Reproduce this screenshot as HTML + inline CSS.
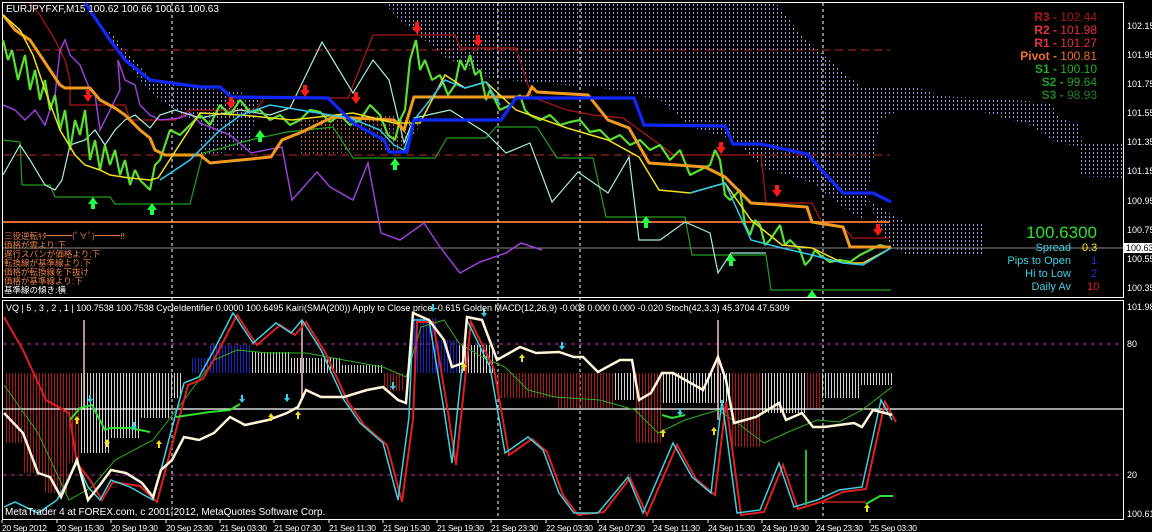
<!DOCTYPE html>
<html><head><meta charset="utf-8"><style>
html,body{margin:0;padding:0;background:#000;width:1152px;height:532px;overflow:hidden}
svg{display:block}
text{font-family:"Liberation Sans","Noto Sans CJK JP",sans-serif}
</style></head><body>
<svg width="1152" height="532" viewBox="0 0 1152 532" xmlns="http://www.w3.org/2000/svg">
<defs>
<pattern id="dots" width="4" height="4" patternUnits="userSpaceOnUse"><rect x="1" y="0" width="1" height="2" fill="#9a9ae8"/></pattern>
<pattern id="rdots" width="4" height="4" patternUnits="userSpaceOnUse"><rect x="1" y="0" width="1" height="2" fill="#c0603a"/></pattern>
<pattern id="red" width="3" height="10" patternUnits="userSpaceOnUse"><rect x="0" y="0" width="1" height="10" fill="#a81818"/></pattern>
<pattern id="wht" width="3" height="10" patternUnits="userSpaceOnUse"><rect x="0" y="0" width="1" height="10" fill="#d0d0d0"/></pattern>
<pattern id="blu" width="3" height="10" patternUnits="userSpaceOnUse"><rect x="0" y="0" width="1" height="10" fill="#2020c8"/></pattern>
</defs>
<rect width="1152" height="532" fill="#000"/>
<!-- cloud -->
<path d="M384,3 L776,3 L800,33 L840,70 L863,88 L919,88 L940,96 L1000,99 L1050,103 L1060,118 L1080,125 L1082,143 L1123,143 L1123,178 L1080,176 L1078,146 L1057,143 L1030,125 L983,112 L900,110 L880,120 L863,220 L843,207 L812,183 L761,167 L735,140 L690,127 L660,100 L598,87 L532,83 L486,77 L445,57 L400,20Z" fill="url(#dots)"/>
<path d="M868,200 L905,222 L983,222 L983,255 L905,255 L885,240Z" fill="url(#dots)"/>
<path d="M105,25 L125,50 L150,78 L200,88 L240,92 L260,100 L250,120 L220,125 L190,120 L160,100 L140,80 L120,55Z" fill="url(#dots)"/>
<path d="M200,100 L225,110 L255,115 L250,150 L200,155Z" fill="url(#dots)"/>
<path d="M300,120 L400,115 L420,125 L405,150 L300,155Z" fill="url(#rdots)"/>
<rect x="2.5" y="2.5" width="1121" height="295" fill="none" stroke="#fff"/>
<rect x="2.5" y="300.5" width="1121" height="219" fill="none" stroke="#fff"/>
<line x1="3" y1="50" x2="890" y2="50" stroke="#c02828" stroke-dasharray="8,5"/>
<line x1="3" y1="155" x2="890" y2="155" stroke="#c02828" stroke-dasharray="8,5"/>
<line x1="3" y1="222" x2="890" y2="222" stroke="#e06a30" stroke-width="2"/>
<line x1="3" y1="248" x2="1123" y2="248" stroke="#8a8a8a"/>
<g stroke="#fff" stroke-dasharray="3,3">
<line x1="172" y1="3" x2="172" y2="520"/><line x1="498" y1="3" x2="498" y2="520"/>
<line x1="580" y1="3" x2="580" y2="520"/><line x1="823" y1="3" x2="823" y2="520"/>
</g>
<polyline fill="none" stroke="#20a020" stroke-width="1.2" points="3,140 20,142 22,185 50,185 55,197 110,197 115,204 190,204 203,153 215,150 250,140 287,132 333,127 353,158 435,158 447,138 486,138 496,127 537,127 557,158 593,158 606,217 685,217 692,255 766,255 771,290 891,290"/>
<polyline fill="none" stroke="#b01818" stroke-width="1.2" points="30,3 40,15 55,40 65,60 70,80 70,105 125,105 130,120 175,120 190,110 256,110 264,98 348,98 373,35 455,35 460,48 516,48 532,97 567,110 593,115 623,118 674,155 761,155 766,203 812,203 822,223 843,227 853,238 889,238"/>
<polyline fill="none" stroke="#9a40d8" stroke-width="1.5" points="3,105 15,110 25,120 35,110 45,125 55,95 60,50 65,40 70,55 80,65 90,90 95,95 100,130 110,110 120,90 118,60 125,80 135,85 140,105 150,115 160,120 180,118 190,113 200,123 230,135 251,153 282,147 292,200 317,172 330,187 353,200 368,163 381,233 400,240 424,223 440,247 460,273 480,262 506,253 521,243 542,250"/>
<polyline fill="none" stroke="#a8f0e0" stroke-width="1.2" points="3,175 20,145 30,160 45,185 55,190 62,180 70,145 85,140 95,130 105,145 115,130 125,120 135,115 150,128 160,115 175,110 200,118 240,110 270,115 290,108 322,42 333,60 353,93 373,60 389,80 404,143 414,118 450,110 486,133 506,153 530,143 552,202 578,172 608,193 629,157 639,240 660,240 685,222 710,233 718,273 731,253 766,253"/>
<polyline fill="none" stroke="#58e030" stroke-width="2.2" stroke-linejoin="bevel" points="3,40 8,60 12,50 18,80 25,55 30,90 35,70 40,100 45,80 50,110 55,95 60,130 65,110 70,150 75,120 80,135 85,110 90,160 95,140 100,170 105,145 110,165 115,150 120,175 125,160 130,185 135,170 140,180 150,190 155,165 160,160 165,145 170,130 180,135 190,125 200,115 210,125 220,105 230,115 240,100 250,112 260,110 270,120 280,115 290,125 300,120 310,110 320,112 330,122 340,115 350,125 360,120 370,105 380,115 388,135 395,140 400,120 405,110 410,60 416,40 420,70 425,60 432,80 440,75 448,95 455,85 460,60 465,70 470,55 475,75 480,70 486,100 490,90 500,110 510,105 520,95 525,110 530,115 540,120 550,115 560,125 570,122 580,120 590,132 600,130 610,140 620,135 630,145 640,140 650,150 660,145 670,160 680,150 690,175 700,170 710,165 715,150 720,160 725,195 730,200 740,190 745,225 750,235 755,220 760,225 765,245 770,240 780,225 785,245 790,240 800,250 805,265 810,260 815,250 820,255 830,262 840,260 850,262 860,255 870,250 880,245 891,248"/>
<polyline fill="none" stroke="#f09a20" stroke-width="3" points="3,15 15,30 30,40 40,55 50,70 60,85 65,88 90,88 100,100 115,108 125,115 140,130 150,138 155,150 165,155 200,155 210,163 271,157 282,140 302,132 333,117 394,120 404,130 414,97 527,97 532,87 537,92 588,95 608,120 629,128 649,163 705,167 725,177 751,203 807,207 812,222 843,227 850,247 891,247"/>
<polyline fill="none" stroke="#f0e020" stroke-width="1.5" points="3,15 20,30 33,55 45,90 60,130 75,155 85,165 100,170 110,175 130,178 150,180 158,178 200,113 241,115 292,120 353,113 394,123 420,123 445,75 465,88 486,82 516,110 567,128 608,140 639,157 659,190 690,193 725,183 751,220 782,245 812,248 843,263 863,263 891,248"/>
<polyline fill="none" stroke="#30c8f0" stroke-width="1.5" points="160,180 190,160 220,130 241,115 270,105 300,110 330,115 350,118 380,130 394,145 404,150 414,120 430,100 445,80 465,88 486,82 500,105"/>
<polyline fill="none" stroke="#30c8f0" stroke-width="1.5" points="690,193 725,183 751,240 782,248 812,255 843,263 863,265 891,248"/>
<polyline fill="none" stroke="#1028ff" stroke-width="3.2" points="85,3 110,40 125,60 150,80 200,87 220,87 231,97 328,98 353,123 384,140 389,152 407,152 414,120 501,120 516,98 634,98 644,125 725,126 733,144 761,144 807,154 828,177 843,193 873,193 891,202"/>
<g fill="#ff1818">
<path d="M86,90 h4 v5 h3 l-5,7 l-5,-7 h3z"/>
<path d="M229,97 h4 v5 h3 l-5,7 l-5,-7 h3z"/>
<path d="M303,85 h4 v5 h3 l-5,7 l-5,-7 h3z"/>
<path d="M354,92 h4 v5 h3 l-5,7 l-5,-7 h3z"/>
<path d="M415,22 h4 v5 h3 l-5,7 l-5,-7 h3z"/>
<path d="M476,35 h4 v5 h3 l-5,7 l-5,-7 h3z"/>
<path d="M719,142 h4 v5 h3 l-5,7 l-5,-7 h3z"/>
<path d="M775,185 h4 v5 h3 l-5,7 l-5,-7 h3z"/>
<path d="M876,224 h4 v5 h3 l-5,7 l-5,-7 h3z"/>
</g>
<g fill="#20ff40">
<path d="M91,209 h4 v-5 h3 l-5,-7 l-5,7 h3z"/>
<path d="M150,215 h4 v-5 h3 l-5,-7 l-5,7 h3z"/>
<path d="M258,142 h4 v-5 h3 l-5,-7 l-5,7 h3z"/>
<path d="M393,170 h4 v-5 h3 l-5,-7 l-5,7 h3z"/>
<path d="M644,228 h4 v-5 h3 l-5,-7 l-5,7 h3z"/>
<path d="M729,266 h4 v-5 h3 l-5,-7 l-5,7 h3z"/>
<path d="M807,297 l5,-7 l5,7z"/>
</g>
<text x="6" y="12" fill="#fff" font-size="10">EURJPYFXF,M15  100.62 100.66 100.61 100.63</text>
<g font-size="8.5" fill="#e8804a">
<text x="4" y="239">三役逆転ｷﾀ━━━(ﾟ∀ﾟ)━━━!!</text>
<text x="4" y="248">価格が雲より:下</text>
<text x="4" y="257">遅行スパンが価格より:下</text>
<text x="4" y="266">転換線が基準線より:下</text>
<text x="4" y="275">価格が転換線を下抜け</text>
<text x="4" y="284">価格が基準線より:下</text>
<text x="4" y="293" fill="#fff">基準線の傾き:横</text>
</g>
<g font-size="12" text-anchor="end">
<text x="1097" y="21" fill="#b01818"><tspan font-weight="bold">R3 - </tspan>102.44</text>
<text x="1097" y="34" fill="#e83040"><tspan font-weight="bold">R2 - </tspan>101.98</text>
<text x="1097" y="47" fill="#e83040"><tspan font-weight="bold">R1 - </tspan>101.27</text>
<text x="1097" y="60" fill="#f07020"><tspan font-weight="bold">Pivot - </tspan>100.81</text>
<text x="1097" y="73" fill="#20b020"><tspan font-weight="bold">S1 - </tspan>100.10</text>
<text x="1097" y="86" fill="#20a020"><tspan font-weight="bold">S2 - </tspan>  99.64</text>
<text x="1097" y="99" fill="#208020"><tspan font-weight="bold">S3 - </tspan>  98.93</text>
</g>
<text x="1097" y="238" fill="#30e030" font-size="17" text-anchor="end">100.6300</text>
<g font-size="11">
<text x="1071" y="251" fill="#40d0e0" text-anchor="end">Spread</text><text x="1082" y="251" fill="#f0f020">0.3</text>
<text x="1071" y="264" fill="#40d0e0" text-anchor="end">Pips to Open</text><text x="1091" y="264" fill="#2030f0">1</text>
<text x="1071" y="277" fill="#40d0e0" text-anchor="end">Hi to Low</text><text x="1091" y="277" fill="#2030f0">2</text>
<text x="1071" y="290" fill="#40d0e0" text-anchor="end">Daily Av</text><text x="1087" y="290" fill="#f02020">10</text>
</g>
<g font-size="9" fill="#fff">
<text x="1127" y="29">102.15</text><text x="1127" y="58">101.95</text><text x="1127" y="87">101.75</text><text x="1127" y="116">101.55</text><text x="1127" y="145">101.35</text><text x="1127" y="174">101.15</text><text x="1127" y="204">100.95</text><text x="1127" y="233">100.75</text><text x="1127" y="262">100.55</text><text x="1127" y="291">100.35</text>
<text x="1127" y="310">101.98</text><text x="1127" y="347">80</text><text x="1127" y="478">20</text><text x="1127" y="517">100.61</text>
</g>
<rect x="1124" y="243" width="28" height="10" fill="#fff"/>
<text x="1126" y="251" font-size="9" fill="#000">100.63</text>
<line x1="3" y1="344" x2="1123" y2="344" stroke="#c030a0" stroke-dasharray="4,4"/>
<line x1="3" y1="475" x2="1123" y2="475" stroke="#c030a0" stroke-dasharray="4,4"/>
<rect x="4" y="373" width="20" height="70" fill="url(#red)"/>
<rect x="24" y="373" width="20" height="100" fill="url(#red)"/>
<rect x="44" y="373" width="25" height="120" fill="url(#red)"/>
<rect x="69" y="373" width="10" height="90" fill="url(#red)"/>
<rect x="79" y="373" width="30" height="80" fill="url(#wht)"/>
<rect x="109" y="373" width="30" height="65" fill="url(#wht)"/>
<rect x="139" y="373" width="30" height="45" fill="url(#wht)"/>
<rect x="169" y="373" width="12" height="25" fill="url(#wht)"/>
<rect x="190" y="358" width="20" height="15" fill="url(#blu)"/>
<rect x="210" y="345" width="40" height="28" fill="url(#blu)"/>
<rect x="250" y="352" width="40" height="21" fill="url(#wht)"/>
<rect x="290" y="358" width="50" height="15" fill="url(#wht)"/>
<rect x="340" y="365" width="43" height="8" fill="url(#wht)"/>
<rect x="383" y="373" width="22" height="18" fill="url(#red)"/>
<rect x="413" y="318" width="24" height="55" fill="url(#blu)"/>
<rect x="437" y="340" width="20" height="33" fill="url(#blu)"/>
<rect x="457" y="345" width="37" height="28" fill="url(#wht)"/>
<rect x="497" y="373" width="60" height="25" fill="url(#red)"/>
<rect x="557" y="373" width="56" height="35" fill="url(#red)"/>
<rect x="613" y="373" width="22" height="27" fill="url(#wht)"/>
<rect x="635" y="373" width="27" height="70" fill="url(#red)"/>
<rect x="662" y="373" width="68" height="30" fill="url(#wht)"/>
<rect x="730" y="373" width="30" height="74" fill="url(#red)"/>
<rect x="760" y="373" width="45" height="40" fill="url(#wht)"/>
<rect x="805" y="373" width="15" height="35" fill="url(#red)"/>
<rect x="820" y="373" width="40" height="25" fill="url(#wht)"/>
<rect x="860" y="373" width="32" height="12" fill="url(#wht)"/>
<line x1="84" y1="320" x2="84" y2="410" stroke="#f0c0c0" stroke-width="1.5"/>
<line x1="302" y1="320" x2="302" y2="400" stroke="#f0c0c0" stroke-width="1.5"/>
<line x1="718" y1="320" x2="718" y2="420" stroke="#ffc0c0" stroke-width="1.5"/>
<line x1="3" y1="409" x2="1123" y2="409" stroke="#fff" stroke-width="1.2"/>
<polyline fill="none" stroke="#30b020" stroke-width="1" points="4,385 38,433 69,500 92,487 115,460 153,440 184,400 214,360 237,350 268,353 306,353 344,360 383,367 406,377 421,327 444,320 459,343 482,357 505,367 528,390 555,397 600,400 635,410 658,433 685,420 718,410 740,425 764,443 786,433 817,420 839,422 862,410 892,387"/>
<polyline fill="none" stroke="#e02020" stroke-width="2" points="4,317 23,350 46,400 69,413 77,463 90,480 102,500 113,482 140,486 157,502 172,445 188,385 203,379 218,352 237,315 257,345 280,325 295,335 306,322 325,352 348,402 364,425 387,445 402,502 413,419 417,322 433,322 448,412 456,465 471,322 494,369 509,455 532,439 547,452 563,495 578,515 604,512 630,478 647,515 677,445 696,479 715,495 726,402 741,515 764,512 783,465 798,509 821,502 843,492 866,489 885,402 896,422"/>
<polyline fill="none" stroke="#40d0e0" stroke-width="1.5" points="4,507 15,502 38,513 57,500 77,463 88,487 100,500 111,480 130,487 153,500 168,443 184,383 199,377 214,350 233,313 253,343 276,323 291,333 302,320 321,350 344,400 360,423 383,443 398,500 409,417 413,320 429,320 444,410 452,463 467,320 490,367 505,453 528,437 543,450 559,493 574,513 598,513 628,477 643,513 673,443 692,477 711,493 722,400 737,513 760,510 779,463 794,507 817,500 839,490 862,487 881,400 892,420"/>
<polyline fill="none" stroke="#fff6dc" stroke-width="2.5" points="4,413 23,433 38,473 50,477 61,497 77,460 88,500 100,485 111,470 126,473 142,483 153,497 161,470 172,460 184,437 199,440 214,433 230,417 245,425 268,420 287,413 298,407 306,390 321,397 344,397 367,390 383,387 398,400 406,403 413,313 429,320 444,340 452,367 463,363 467,317 482,320 497,360 520,347 536,353 559,352 574,357 583,357 598,372 620,360 632,360 639,400 651,393 662,373 673,373 703,390 718,357 726,380 734,423 756,417 779,403 786,420 802,413 813,427 824,427 854,423 862,427 873,410 885,413 892,415"/>
<polyline fill="none" stroke="#30e030" stroke-width="2" points="70,420 80,408 92,405 105,430 110,428 130,428 150,432"/>
<polyline fill="none" stroke="#30e030" stroke-width="2" points="176,417 210,412 230,410 240,404"/>
<polyline fill="none" stroke="#30e030" stroke-width="2" points="662,415 672,418 685,415"/>
<line x1="806" y1="450" x2="806" y2="505" stroke="#20c020" stroke-width="2"/>
<polyline fill="none" stroke="#30e030" stroke-width="2" points="866,504 880,496 893,496"/>
<polyline fill="none" stroke="#c02020" stroke-width="1.5" points="820,502 866,502"/>
<g fill="#f0e020">
<path d="M76,424 h2 v-4 h2 l-3,-4 l-3,4 h2z"/><path d="M106,447 h2 v-4 h2 l-3,-4 l-3,4 h2z"/><path d="M158,448 h2 v-4 h2 l-3,-4 l-3,4 h2z"/><path d="M270,421 h2 v-4 h2 l-3,-4 l-3,4 h2z"/><path d="M297,419 h2 v-4 h2 l-3,-4 l-3,4 h2z"/><path d="M463,371 h2 v-4 h2 l-3,-4 l-3,4 h2z"/><path d="M521,362 h2 v-4 h2 l-3,-4 l-3,4 h2z"/><path d="M662,437 h2 v-4 h2 l-3,-4 l-3,4 h2z"/><path d="M713,435 h2 v-4 h2 l-3,-4 l-3,4 h2z"/><path d="M866,512 h2 v-4 h2 l-3,-4 l-3,4 h2z"/>
</g>
<g fill="#30d0f0">
<path d="M89,395 h2 v4 h2 l-3,4 l-3,-4 h2z"/><path d="M133,422 h2 v4 h2 l-3,4 l-3,-4 h2z"/><path d="M241,395 h2 v4 h2 l-3,4 l-3,-4 h2z"/><path d="M286,394 h2 v4 h2 l-3,4 l-3,-4 h2z"/><path d="M392,382 h2 v4 h2 l-3,4 l-3,-4 h2z"/><path d="M432,304 h2 v4 h2 l-3,4 l-3,-4 h2z"/><path d="M483,309 h2 v4 h2 l-3,4 l-3,-4 h2z"/><path d="M561,342 h2 v4 h2 l-3,4 l-3,-4 h2z"/><path d="M679,408 h2 v4 h2 l-3,4 l-3,-4 h2z"/>
</g>
<text x="6" y="311" fill="#fff" font-size="9">VQ | 5 , 3 , 2 , 1 |  100.7538 100.7538  CycleIdentifier 0.0000 100.6495  Kairi(SMA(200)) Apply to Close price -0.615  Golden MACD(12,26,9) -0.008 0.000 0.000 -0.020  Stoch(42,3,3) 45.3704 47.5309</text>
<text x="5" y="515" fill="#fff" font-size="10">MetaTrader 4 at FOREX.com, c 2001-2012, MetaQuotes Software Corp.</text>
<g stroke="#fff"><line x1="2" y1="520" x2="2" y2="523"/><line x1="57" y1="520" x2="57" y2="523"/><line x1="111" y1="520" x2="111" y2="523"/><line x1="166" y1="520" x2="166" y2="523"/><line x1="220" y1="520" x2="220" y2="523"/><line x1="274" y1="520" x2="274" y2="523"/><line x1="329" y1="520" x2="329" y2="523"/><line x1="383" y1="520" x2="383" y2="523"/><line x1="437" y1="520" x2="437" y2="523"/><line x1="491" y1="520" x2="491" y2="523"/><line x1="546" y1="520" x2="546" y2="523"/><line x1="598" y1="520" x2="598" y2="523"/><line x1="653" y1="520" x2="653" y2="523"/><line x1="708" y1="520" x2="708" y2="523"/><line x1="762" y1="520" x2="762" y2="523"/><line x1="816" y1="520" x2="816" y2="523"/><line x1="870" y1="520" x2="870" y2="523"/></g>
<g font-size="8.5" fill="#fff">
<text x="2" y="531" textLength="45">20 Sep 2012</text><text x="57" y="531" textLength="47">20 Sep 15:30</text><text x="111" y="531" textLength="47">20 Sep 19:30</text><text x="166" y="531" textLength="47">20 Sep 23:30</text><text x="220" y="531" textLength="47">21 Sep 03:30</text><text x="274" y="531" textLength="47">21 Sep 07:30</text><text x="329" y="531" textLength="47">21 Sep 11:30</text><text x="383" y="531" textLength="47">21 Sep 15:30</text><text x="437" y="531" textLength="47">21 Sep 19:30</text><text x="491" y="531" textLength="47">21 Sep 23:30</text><text x="546" y="531" textLength="47">22 Sep 03:30</text><text x="598" y="531" textLength="47">24 Sep 07:30</text><text x="653" y="531" textLength="47">24 Sep 11:30</text><text x="708" y="531" textLength="47">24 Sep 15:30</text><text x="762" y="531" textLength="47">24 Sep 19:30</text><text x="816" y="531" textLength="47">24 Sep 23:30</text><text x="870" y="531" textLength="47">25 Sep 03:30</text>
</g>
</svg>
</body></html>
